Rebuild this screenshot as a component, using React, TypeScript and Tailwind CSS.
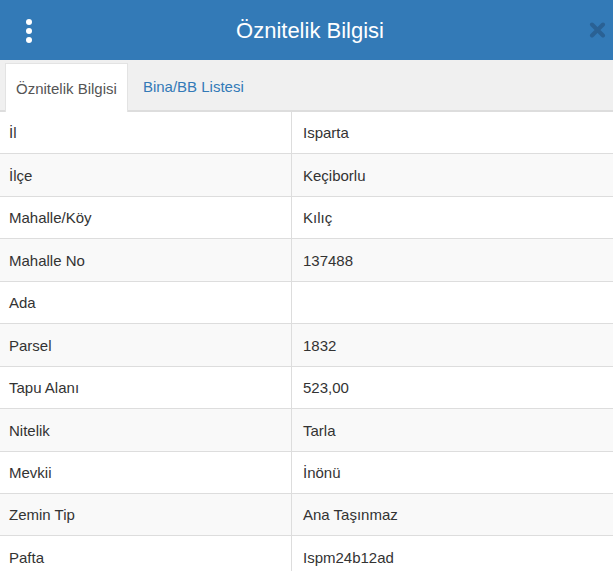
import React from 'react'

const rows: [string, string][] = [
  ['İl', 'Isparta'],
  ['İlçe', 'Keçiborlu'],
  ['Mahalle/Köy', 'Kılıç'],
  ['Mahalle No', '137488'],
  ['Ada', ''],
  ['Parsel', '1832'],
  ['Tapu Alanı', '523,00'],
  ['Nitelik', 'Tarla'],
  ['Mevkii', 'İnönü'],
  ['Zemin Tip', 'Ana Taşınmaz'],
  ['Pafta', 'Ispm24b12ad'],
]

export default function App() {
  return (
    <div className="w-[613px] h-[571px] overflow-hidden bg-white text-[#333] font-['Liberation_Sans',Arial,sans-serif]">
      {/* header */}
      <div className="h-[60px] bg-[#337ab7] flex items-center">
        <div className="w-[58px] flex flex-col items-center gap-[3px] pt-[1px]">
          <span className="w-[6px] h-[6px] rounded-full bg-white" />
          <span className="w-[6px] h-[6px] rounded-full bg-white" />
          <span className="w-[6px] h-[6px] rounded-full bg-white" />
        </div>
        <div className="flex-1 text-center text-white text-[22px] pl-[3px]">Öznitelik Bilgisi</div>
        <div className="w-[54px] flex justify-end pr-[7px]">
          <svg width="17" height="16" viewBox="0 0 17 16">
            <path d="M3 2.5 L14 13.5 M14 2.5 L3 13.5" stroke="#2a6194" strokeWidth="4" strokeLinecap="round" />
          </svg>
        </div>
      </div>

      {/* tabs */}
      <div className="h-[52px] bg-[#f0f0f0] border-b-2 border-[#dddddd] flex items-end pl-[5px]">
        <div className="h-[49px] -mb-[2px] bg-white border border-b-0 border-[#e3e3e3] px-[10px] pt-[3px] flex items-center text-[15px] text-[#555]">
          Öznitelik Bilgisi
        </div>
        <div className="h-[49px] pl-[15px] pt-[3px] flex items-center text-[15px] text-[#337ab7]">Bina/BB Listesi</div>
      </div>

      {/* table */}
      <div>
        {rows.map(([k, v], i) => (
          <div
            key={k}
            className={`flex h-[42.45px] border-b border-[#dddddd] text-[15px] ${i % 2 === 1 ? 'bg-[#f9f9f9]' : 'bg-white'}`}
          >
            <div className="w-[292px] border-r border-[#dddddd] pl-[9px] pt-[2px] flex items-center">{k}</div>
            <div className="flex-1 pl-[11px] pt-[2px] flex items-center">{v}</div>
          </div>
        ))}
      </div>
    </div>
  )
}
